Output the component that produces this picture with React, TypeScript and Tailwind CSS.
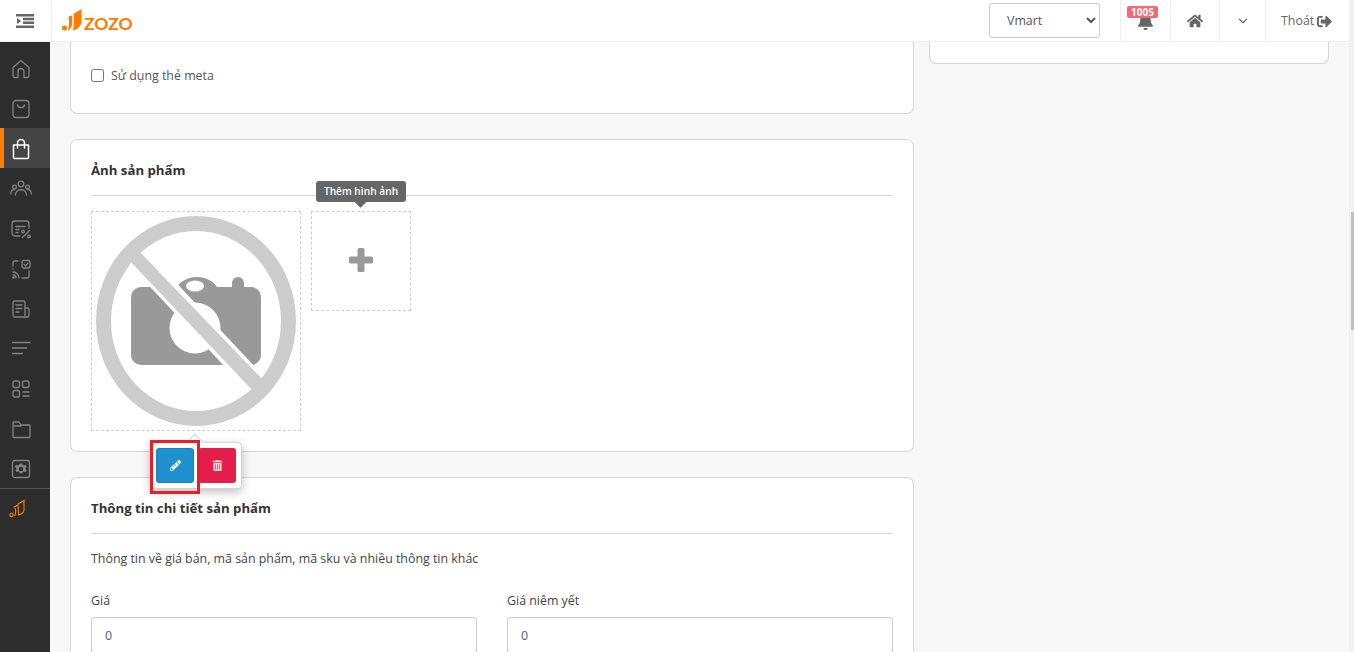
import React from "react";
import { FaBell, FaHome, FaPencilAlt, FaTrashAlt, FaSignOutAlt } from "react-icons/fa";
import { LuChevronDown } from "react-icons/lu";

const S = { fill: "none", stroke: "currentColor", strokeWidth: 1.3, strokeLinecap: "round", strokeLinejoin: "round" } as const;

function NavIcon({ children }: { children: React.ReactNode }) {
  return <svg width="22" height="22" viewBox="0 0 22 22" {...S}>{children}</svg>;
}

const icons = [
  <><path d="M3 9.500 11 2.500l8 7v8.500a1.500 1.500 0 0 1-1.500 1.500H14v-6a3 3 0 0 0-6 0v6H4.500A1.500 1.500 0 0 1 3 18z" /></>,
  <><rect x="3" y="2.500" width="16" height="17" rx="3" /><path d="M7.500 7c.8 3.500 6.200 3.500 7 0" /></>,
  null,
  <><circle cx="11" cy="6" r="2.800" /><circle cx="4.500" cy="9" r="1.900" /><circle cx="17.500" cy="9" r="1.900" /><path d="M5.500 17c0-7 11-7 11 0" /><path d="M.8 16c0-3 1.500-4.300 3.500-4.300M21.200 16c0-3-1.500-4.300-3.500-4.300" /></>,
  <><path d="M10 18H5a3 3 0 0 1-3-3V6a3 3 0 0 1 3-3h11a3 3 0 0 1 3 3v4" /><path d="M6 8.500h9M6 11.500h3M6 14.500h2" /><path d="m12.500 19.500 7-7" /><circle cx="13" cy="13.500" r="1.300" /><circle cx="19" cy="18.500" r="1.300" /></>,
  <><path d="M8 3H5a2 2 0 0 0-2 2v3M3 11v0M19 13v5a2 2 0 0 1-2 2h-5" /><rect x="12" y="2.500" width="8" height="7.500" rx="1.500" /><path d="m14 6.300 1.500 1.500 2.500-2.700" /><path d="M3 14a6 6 0 0 1 6 6M3 17a3 3 0 0 1 3 3" /><circle cx="3.500" cy="19.500" r=".6" /></>,
  <><path d="M15 17.500V4.500A1.500 1.500 0 0 0 13.500 3h-9A1.500 1.500 0 0 0 3 4.500v13A1.500 1.500 0 0 0 4.500 19H17a2 2 0 0 0 2-2v-5.500a1.500 1.500 0 0 0-1.500-1.500H15" /><path d="M6 7h6M6 10.500h6M6 14h3" /></>,
  <><path d="M2.500 4.500h17.500M2.500 10h14M2.500 15.500h10" /></>,
  <><rect x="3" y="3" width="6.500" height="6.500" rx="2" /><rect x="12.500" y="3" width="6.500" height="6.500" rx="2" /><rect x="3" y="12.500" width="6.500" height="6.500" rx="2" /><path d="M13 14h6M13 18h6" /></>,
  <><path d="M3 18.500V4h6l2 3h9v11.500a1 1 0 0 1-1 1H4a1 1 0 0 1-1-1zM3 8h8" /></>,
  <><rect x="2.500" y="2.500" width="17" height="17" rx="2" /><path fill="currentColor" stroke="none" fillRule="evenodd" d="m9.700 5.500h2.600l.4 1.500 1.300.6 1.400-.8 1.400 1.900-1.100 1.100v1.400l1.100 1.100-1.400 1.900-1.400-.8-1.300.6-.4 1.500H9.700l-.4-1.500-1.300-.6-1.400.8-1.400-1.900 1.100-1.100V9.800L4.700 8.700l1.400-1.900 1.400.8L8.800 7zM11 8.800a2.200 2.200 0 1 0 0 4.400 2.200 2.200 0 0 0 0-4.400z" /></>,
];

function Logo() {
  return (
    <svg width="20" height="23" viewBox="0 0 20 23" className="shrink-0">
      <path fill="#ff7a00" d="M11.500 5 19.500 0v12c0 5-3.500 8-8.500 9.800 1-4.500 1.500-11.800.5-16.800zM6.500 7.500c1.200 0 2.500-.5 3.700-1.200v8c0 3.500-1.800 6.200-4.200 7.700 1-5 1.200-9.500.5-14.500z" />
      <circle cx="2.500" cy="19" r="2.500" fill="#ff7a00" />
    </svg>
  );
}

function NoPhoto() {
  return (
    <svg width="208" height="218" viewBox="92 212 208 218" className="block">
      <rect x="131" y="287" width="130" height="78" rx="10" fill="#999999" />
      <ellipse cx="197" cy="292" rx="21" ry="15" fill="#999999" />
      <circle cx="238" cy="283" r="6" fill="#999999" />
      <rect x="232" y="283" width="12" height="6" fill="#999999" />
      <ellipse cx="195" cy="286" rx="9" ry="5.500" fill="#ffffff" />
      <circle cx="195" cy="328" r="25.500" fill="#ffffff" />
      <polygon fill="#ffffff" points="125,228 270,383 270,415 125,260" />
      <polygon fill="#cccccc" points="128,259 137,249 265,382 256,394" />
      <ellipse cx="196" cy="321" rx="92.500" ry="97.500" fill="none" stroke="#cccccc" strokeWidth="15" />
    </svg>
  );
}

function Field({ label }: { label: string }) {
  return (
    <div className="flex-1">
      <div className="text-[12.4px] leading-[18px] text-[#444444] font-medium mb-[7px]">{label}</div>
      <div className="h-[36px] border border-[#cccccc] rounded-[3px] bg-white px-[13px] pt-[2px] flex items-center text-[12.4px] text-[#5a5a8a]">0</div>
    </div>
  );
}

export default function App() {
  return (
    <div className="w-[1354px] h-[652px] overflow-hidden flex bg-[#f8f8f8] font-['Open_Sans','Noto_Sans',sans-serif] text-[#444444]">
      <div className="w-[1349px] shrink-0 flex flex-col">
        <header className="h-[42px] shrink-0 bg-white border-b border-[#eeeeee] flex items-stretch relative z-20">
          <div className="w-[52px] border-r border-[#eeeeee] flex items-center justify-center">
            <svg width="18" height="14" viewBox="0 0 18 14" className="-ml-[1px]">
              <path fill="#666666" d="M0 0h18v2.500H0zM7 3.700h11v2.500H7zM7 7.600h11v2.500H7zM0 11.500h18V14H0zM1 4l4 3-4 3z" />
            </svg>
          </div>
          <div className="flex items-center pl-[10px] gap-[2px]">
            <Logo />
            <span className="text-[#ff7a00] text-[17.5px] font-bold leading-none font-['Lato',sans-serif] mt-[6px]">ZOZO</span>
          </div>
          <div className="flex-1" />
          <div className="flex items-center pr-[20px]">
            <select defaultValue="Vmart" className="w-[111px] h-[35px] bg-white border border-[#cccccc] rounded-[3px] pl-[13px] text-[12.4px] text-[#555555]">
              <option>Vmart</option>
            </select>
          </div>
          <div className="w-[50px] border-l border-[#eeeeee] relative flex items-center justify-center">
            <FaBell className="text-[17px] text-[#666666] mt-[2px]" />
            <span className="absolute left-[6px] top-[6px] h-[12px] px-[4px] rounded-[2px] bg-[#f8686e] text-white text-[10px] leading-[12px] font-bold">1005</span>
          </div>
          <div className="w-[49px] border-l border-[#eeeeee] flex items-center justify-center">
            <FaHome className="text-[16px] text-[#666666]" />
          </div>
          <div className="w-[46px] border-l border-[#eeeeee] flex items-center justify-center">
            <LuChevronDown className="text-[14px] text-[#666666]" />
          </div>
          <div className="w-[84px] border-l border-[#eeeeee] flex items-center pl-[15px] pt-[1px] gap-[3px] text-[12.4px] text-[#666666]">
            <span>Thoát</span>
            <FaSignOutAlt className="text-[15px]" />
          </div>
        </header>

        <div className="flex-1 flex min-h-0">
          <aside className="w-[50px] shrink-0 bg-[#2d2d2d] text-[#848484] flex flex-col">
            <div className="pt-[6px] flex flex-col">
              {icons.map((ic, i) =>
                ic ? (
                  <div key={i} className="h-[40px] flex items-center pl-[10px] pt-[2px]"><NavIcon>{ic}</NavIcon></div>
                ) : (
                  <div key={i} className="h-[40px] flex items-center bg-[#444444] border-l-[4px] border-[#ff7f00] pl-[8px] pt-[2px] text-white">
                    <svg width="18" height="22" viewBox="0 0 18 22" {...S} strokeWidth={1.5}><path d="M1.500 7h15v12.500a1 1 0 0 1-1 1h-13a1 1 0 0 1-1-1z" /><path d="M5.500 10V5a3.500 3.500 0 0 1 7 0v5" /></svg>
                  </div>
                )
              )}
            </div>
            <div className="border-t border-[#555555] h-[40px] flex items-center pl-[9px] text-[#ff7f00]">
              <svg width="16" height="20" viewBox="0 0 16 20" fill="none" stroke="currentColor" strokeWidth="1.100"><path d="M9 5 15 1.500V11c0 2.500-2 3.800-5.500 5zM4.500 8c1.500 0 3-.8 3.500-2M6 9c1 2.500 1 5-.5 8" /><circle cx="2.500" cy="16" r="1.700" /></svg>
            </div>
          </aside>

          <main className="flex-1 flex gap-[15px] pl-[20px] pr-[20px] overflow-hidden">
            <div className="w-[844px] shrink-0 flex flex-col gap-[25px]">
              <section className="h-[72px] shrink-0 bg-white border border-t-0 border-[#d5d5d5] rounded-b-[7px] pl-[20px] pt-[24px]">
                <label className="flex items-center gap-[7px] text-[12.4px] leading-[18px] text-[#555555]">
                  <span className="w-[13px] h-[13px] border border-[#767676] rounded-[2.500px] bg-white" />
                  <span className="pt-[1px]">Sử dụng thẻ meta</span>
                </label>
              </section>

              <section className="h-[313px] shrink-0 bg-white border border-[#d5d5d5] rounded-[7px] px-[20px] pt-[20px]">
                <h2 className="text-[13.2px] leading-[20px] font-bold text-[#333333]">Ảnh sản phẩm</h2>
                <div className="h-px bg-[#d5d5d5] mt-[15px]" />
                <div className="flex gap-[10px] mt-[15px] items-start">
                  <div className="relative w-[210px] h-[220px] border border-dashed border-[#cccccc] shrink-0">
                    <NoPhoto />
                    <div className="absolute left-[58px] top-[230px] z-10 w-[92px] h-[47px] bg-white border border-[#d5d5d5] rounded-[4px] shadow-[0_3px_10px_rgba(0,0,0,0.25)] flex items-center gap-[4px] pl-[5px]">
                      <span className="absolute left-[38px] -top-[7px] w-[12px] h-[12px] rotate-45 bg-white border-l border-t border-[#d5d5d5]" />
                      <button className="relative shrink-0 w-[38px] h-[35px] rounded-[3px] bg-[#1e90cd] border border-[#1a7fb5] flex items-center justify-center text-white">
                        <FaPencilAlt className="text-[11px]" />
                      </button>
                      <button className="relative shrink-0 w-[38px] h-[35px] rounded-[3px] bg-[#e61e4b] flex items-center justify-center text-[#ffd5de]">
                        <FaTrashAlt className="text-[11px]" />
                      </button>
                      <span className="absolute left-[-1px] top-[-3px] w-[50px] h-[54px] border-[3px] border-[#ec1c24]" />
                    </div>
                  </div>
                  <div className="relative w-[100px] h-[100px] border border-dashed border-[#cccccc] flex items-center justify-center shrink-0">
                    <svg width="24" height="24" viewBox="0 0 24 24" className="-mt-[2px]">
                      <path fill="#999999" d="M10 0h4a1.500 1.500 0 0 1 1.500 1.500V8.500h7A1.500 1.500 0 0 1 24 10v4a1.500 1.500 0 0 1-1.500 1.500h-7v7A1.500 1.500 0 0 1 14 24h-4a1.500 1.500 0 0 1-1.500-1.500v-7h-7A1.500 1.500 0 0 1 0 14v-4a1.500 1.500 0 0 1 1.500-1.500h7v-7A1.500 1.500 0 0 1 10 0z" />
                    </svg>
                    <div className="absolute left-[4px] -top-[31px] w-[90px] h-[21px] bg-[#666666] rounded-[3px] text-white text-[10.2px] font-semibold flex items-center justify-center whitespace-nowrap">
                      Thêm hình ảnh
                      <span className="absolute left-[40px] -bottom-[4px] w-[9px] h-[9px] rotate-45 bg-[#666666]" />
                    </div>
                  </div>
                </div>
              </section>

              <section className="flex-1 bg-white border border-b-0 border-[#d5d5d5] rounded-t-[7px] px-[20px] pt-[20px]">
                <h2 className="text-[13.2px] leading-[20px] font-bold text-[#333333]">Thông tin chi tiết sản phẩm</h2>
                <div className="h-px bg-[#d5d5d5] mt-[15px]" />
                <p className="text-[12.4px] leading-[18px] text-[#444444] mt-[16px]">Thông tin về giá bán, mã sản phẩm, mã sku và nhiều thông tin khác</p>
                <div className="flex gap-[30px] mt-[24px]">
                  <Field label="Giá" />
                  <Field label="Giá niêm yết" />
                </div>
              </section>
            </div>

            <aside className="w-[400px] shrink-0">
              <div className="h-[22px] bg-white border border-t-0 border-[#d5d5d5] rounded-b-[7px]" />
            </aside>
          </main>
        </div>
      </div>
      <div className="w-[5px] shrink-0 bg-[#f1f1f1] pl-[2px] pt-[212px]">
        <div className="w-[3px] h-[118px] bg-[#c1c1c1]" />
      </div>
    </div>
  );
}
